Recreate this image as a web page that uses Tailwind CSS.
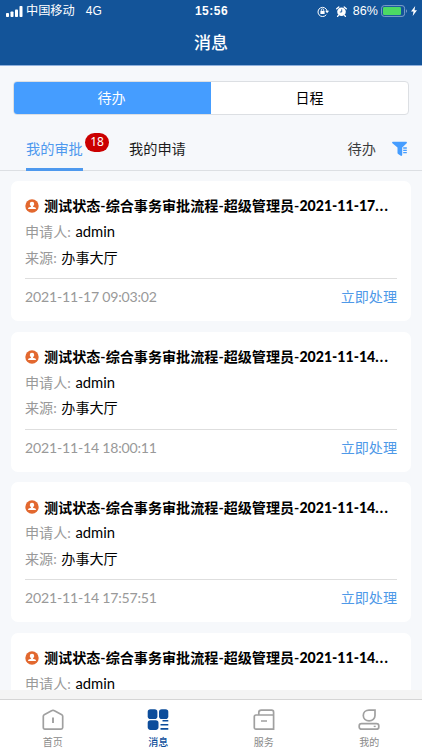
<!DOCTYPE html>
<html lang="zh-CN">
<head>
<meta charset="utf-8">
<meta name="viewport" content="width=device-width, initial-scale=1">
<title>消息</title>
<script src="https://cdn.jsdelivr.net/npm/@tailwindcss/browser@4"></script>
</head>
<body class="w-[422px] h-[750px] overflow-hidden flex flex-col bg-[#f6f8fb] font-[Lato,'Noto_Sans_CJK_SC',sans-serif] text-black">
<svg class="hidden">
  <symbol id="person" viewBox="0 0 14 14">
    <circle cx="7" cy="7" r="6.7" fill="#e2682f"/>
    <path d="M7 2.800a2.200 2.200 0 0 1 2.200 2.300c0 1-.6 1.800-1.200 2.200v.5l2.300.8c.4.2.6.5.6.9v.6H3.100v-.6c0-.4.2-.7.6-.9L6 7.800v-.5c-.6-.4-1.200-1.200-1.200-2.200A2.200 2.200 0 0 1 7 2.800z" fill="#fff"/>
  </symbol>
</svg>

<header class="h-[66px] shrink-0 bg-[#135499] border-b border-[#8fb0dc] text-white">
  <div class="h-[22px] flex items-center justify-between pl-[6px] pr-[5px] font-['Liberation_Sans','Noto_Sans_CJK_SC',sans-serif] text-[12px] leading-[22px]">
    <div class="flex items-center w-[190px]">
      <svg class="w-[17px] h-[11px] mr-[3px]" viewBox="0 0 17 11" fill="#fff"><rect x="0" y="7" width="3" height="4" rx=".8"/><rect x="4.500" y="5.500" width="3" height="5.500" rx=".8"/><rect x="9" y="3.500" width="3" height="7.500" rx=".8"/><rect x="13.500" y="0" width="3" height="11" rx=".8"/></svg>
      <span class="text-[12.2px]">中国移动</span><span class="ml-[11px] text-[12px]">4G</span>
    </div>
    <span class="font-bold text-[12px] tracking-[0.5px]">15:56</span>
    <div class="flex items-center justify-end w-[190px]">
      <svg class="w-[13px] h-[11px] mr-[6px]" viewBox="0 0 13 11" fill="none" stroke="#fff"><path d="M9.300 8.700A4.600 4.600 0 1 1 10.100 5"/><path d="M8.200 4.800h3.900l-2 2.400z" fill="#fff" stroke="none"/><rect x="3.400" y="4.900" width="4.200" height="3.100" fill="#fff" stroke="none"/><path d="M4.300 5V4a1.200 1.200 0 0 1 2.400 0v1" stroke-width=".8"/></svg>
      <svg class="w-[11px] h-[11px] mr-[6px]" viewBox="0 0 11 11"><circle cx="5.500" cy="5.800" r="4.300" fill="#fff"/><path d="M.7 2.800 2.800.9M10.300 2.800 8.200.9M2.400 9.300l-.8 1.100M8.600 9.300l.8 1.100" stroke="#fff" stroke-width="1.300" stroke-linecap="round"/><path d="M5.700 3.300v2.700H3.800" fill="none" stroke="#135499" stroke-width=".9"/></svg>
      <span class="text-[12.5px] tracking-[0.1px]">86%</span>
      <svg class="w-[27px] h-[12px] ml-[3px] mr-[3px]" viewBox="0 0 27 12"><rect x=".6" y=".6" width="23" height="10.800" rx="2.600" fill="none" stroke="#7f9fca"/><rect x="2" y="2" width="18" height="8" rx="1.200" fill="#4cd964"/><path d="M25 4.200c1.300.4 1.300 3.200 0 3.600z" fill="#7f9fca"/></svg>
      <svg class="w-[6px] h-[10px]" viewBox="0 0 6 10" fill="#fff"><path d="M4.200 0 0 5.600h2.500L1.700 10 6 4.300H3.500z"/></svg>
    </div>
  </div>
  <h1 class="text-center text-[17px] font-medium leading-[42px]">消息</h1>
</header>

<div class="h-[105px] shrink-0 border-b border-[#dcdfe3] flex flex-col">
  <div class="mt-[15px] ml-[13px] w-[396px] h-[34px] flex shrink-0 rounded-[4px] border border-[#dcdfe3] overflow-hidden text-[14px] leading-[31px] text-center bg-white">
    <div class="w-[197px] pr-[2px] bg-[#459dff] text-white">待办</div>
    <div class="flex-1">日程</div>
  </div>
  <nav class="flex-1 flex items-end pl-[26px] pr-[14px] text-[14.2px] leading-[20px]">
    <div class="relative -mb-px h-[32px] w-[57px] border-b-[3px] border-[#4e99ee] text-[#4e99ee] whitespace-nowrap">我的审批
      <span class="absolute left-[59px] -top-[6px] h-[19px] w-[24px] rounded-full bg-[#cb0000] text-white text-[12px] leading-[17px] text-center font-['Noto_Sans',sans-serif]">18</span>
    </div>
    <div class="h-[31px] ml-[46px] text-[#1c1c1c]">我的申请</div>
    <div class="h-[31px] ml-auto text-[#3c3c3c]">待办</div>
    <svg class="w-[16px] h-[16px] ml-[16px] mb-[13px]" viewBox="0 0 16 16" fill="#459dff"><path d="M.8.800h13.400c.8 0 1 .8.500 1.400L10.200 6.400v7.700c0 .7-.8 1-1.400.6L6.100 13c-.4-.2-.6-.5-.6-1V6.500L.4 2.200C-.2 1.600.1.800.8.800z"/><path d="M11.200 7h3.600M11.200 9.300h3.600M11.200 11.600h3.600" stroke="#459dff" stroke-width="1.300"/></svg>
  </nav>
</div>

<main class="h-[519px] shrink-0 overflow-hidden pt-[10px] px-[11px] flex flex-col gap-[10.7px]">
  <article class="h-[140px] shrink-0 rounded-[7px] bg-white pl-[14px] pr-[14px] pt-[12px] text-[14.1px]">
    <h2 class="flex items-center h-[26px] font-bold whitespace-nowrap"><svg class="w-[14px] h-[14px] mr-[5px] shrink-0"><use href="#person"/></svg><span>测试状态-综合事务审批流程-超级管理员-</span><span class="font-black">2021-11-17<span class="tracking-[1.2px]">...</span></span></h2>
    <p class="h-[25.500px] leading-[25.500px]"><span class="text-[#999]">申请人: </span><span class="ml-[1px] text-[14.8px]">admin</span></p>
    <p class="h-[25.500px] leading-[25.500px]"><span class="text-[#999]">来源: </span><span class="ml-[1px]">办事大厅</span></p>
    <footer class="mt-[8px] border-t border-[#dedede] flex justify-between leading-[36px] text-[#999]"><time class="tracking-[-0.2px]">2021-11-17 09:03:02</time><a class="text-[#4e99e8]">立即处理</a></footer>
  </article>
  <article class="h-[140px] shrink-0 rounded-[7px] bg-white pl-[14px] pr-[14px] pt-[12px] text-[14.1px]">
    <h2 class="flex items-center h-[26px] font-bold whitespace-nowrap"><svg class="w-[14px] h-[14px] mr-[5px] shrink-0"><use href="#person"/></svg><span>测试状态-综合事务审批流程-超级管理员-</span><span class="font-black">2021-11-14<span class="tracking-[1.2px]">...</span></span></h2>
    <p class="h-[25.500px] leading-[25.500px]"><span class="text-[#999]">申请人: </span><span class="ml-[1px] text-[14.8px]">admin</span></p>
    <p class="h-[25.500px] leading-[25.500px]"><span class="text-[#999]">来源: </span><span class="ml-[1px]">办事大厅</span></p>
    <footer class="mt-[8px] border-t border-[#dedede] flex justify-between leading-[36px] text-[#999]"><time class="tracking-[-0.2px]">2021-11-14 18:00:11</time><a class="text-[#4e99e8]">立即处理</a></footer>
  </article>
  <article class="h-[140px] shrink-0 rounded-[7px] bg-white pl-[14px] pr-[14px] pt-[12px] text-[14.1px]">
    <h2 class="flex items-center h-[26px] font-bold whitespace-nowrap"><svg class="w-[14px] h-[14px] mr-[5px] shrink-0"><use href="#person"/></svg><span>测试状态-综合事务审批流程-超级管理员-</span><span class="font-black">2021-11-14<span class="tracking-[1.2px]">...</span></span></h2>
    <p class="h-[25.500px] leading-[25.500px]"><span class="text-[#999]">申请人: </span><span class="ml-[1px] text-[14.8px]">admin</span></p>
    <p class="h-[25.500px] leading-[25.500px]"><span class="text-[#999]">来源: </span><span class="ml-[1px]">办事大厅</span></p>
    <footer class="mt-[8px] border-t border-[#dedede] flex justify-between leading-[36px] text-[#999]"><time class="tracking-[-0.2px]">2021-11-14 17:57:51</time><a class="text-[#4e99e8]">立即处理</a></footer>
  </article>
  <article class="h-[140px] shrink-0 rounded-[7px] bg-white pl-[14px] pr-[14px] pt-[12px] text-[14.1px]">
    <h2 class="flex items-center h-[26px] font-bold whitespace-nowrap"><svg class="w-[14px] h-[14px] mr-[5px] shrink-0"><use href="#person"/></svg><span>测试状态-综合事务审批流程-超级管理员-</span><span class="font-black">2021-11-14<span class="tracking-[1.2px]">...</span></span></h2>
    <p class="h-[25.500px] leading-[25.500px]"><span class="text-[#999]">申请人: </span><span class="ml-[1px] text-[14.8px]">admin</span></p>
  </article>
</main>

<div class="h-[9px] shrink-0 bg-[#f4f4f4]"></div>
<nav class="h-[51px] shrink-0 border-t border-[#d5d5d5] bg-white grid grid-cols-4 text-[10px] leading-[14px] text-[#8a8a8a]">
  <div class="flex flex-col items-center pt-[9px]">
    <svg class="w-[22px] h-[22px]" viewBox="0 0 22 22" fill="none" stroke="#a0a0a0" stroke-width="1.700"><path d="M1.300 7.200c0-.7.300-1.200.9-1.500L10 1.600c.7-.4 1.300-.4 2 0l7.800 4.100c.6.3.9.8.9 1.500v11.300c0 1-.6 1.600-1.600 1.600H2.900c-1 0-1.600-.6-1.600-1.600z"/><path d="M11 8.500v5.500" stroke-width="1.900"/></svg>
    <span class="mt-[4px]">首页</span>
  </div>
  <div class="flex flex-col items-center pt-[9px] text-[#0d4d9b]">
    <svg class="w-[22px] h-[22px]" viewBox="0 0 22 22" fill="#0d4d9b"><rect x=".7" y=".3" width="9.700" height="9.700" rx="2.800"/><rect x="12" y=".3" width="9.300" height="9.700" rx="2.800"/><rect x=".7" y="11.200" width="10.800" height="9.700" rx="2.800"/><path d="M15.500 11.800h5.800M13.500 15.800h7.800M13.500 19.900h7.800" stroke="#0d4d9b" stroke-width="1.600"/></svg>
    <span class="mt-[4px] font-medium">消息</span>
  </div>
  <div class="flex flex-col items-center pt-[9px]">
    <svg class="w-[22px] h-[22px]" viewBox="0 0 22 22" fill="none" stroke="#a0a0a0" stroke-width="1.700"><path d="M20.600 20.100H3c-1 0-1.700-.7-1.700-1.700V7.700c0-1 .7-1.700 1.700-1.700h17.600M20.600 20.900V3.200c0-1.300-.7-2-2-2H8.300c-1.600 0-2.500.8-2.500 2.400V6M8 12h6"/></svg>
    <span class="mt-[4px]">服务</span>
  </div>
  <div class="flex flex-col items-center pt-[9px]">
    <svg class="w-[22px] h-[22px]" viewBox="0 0 22 22" fill="none" stroke="#a0a0a0" stroke-width="1.700"><path d="M17 1.200h-6c-3.300 0-5.700 2.300-5.700 5.300s2.500 5.300 5.800 5.300S17 9.500 17 6.500z"/><rect x="1.200" y="14.700" width="19.600" height="5.500" rx="2.300"/><path d="M15.700 17.400h2" stroke-width="1.400"/></svg>
    <span class="mt-[4px]">我的</span>
  </div>
</nav>
</body>
</html>
